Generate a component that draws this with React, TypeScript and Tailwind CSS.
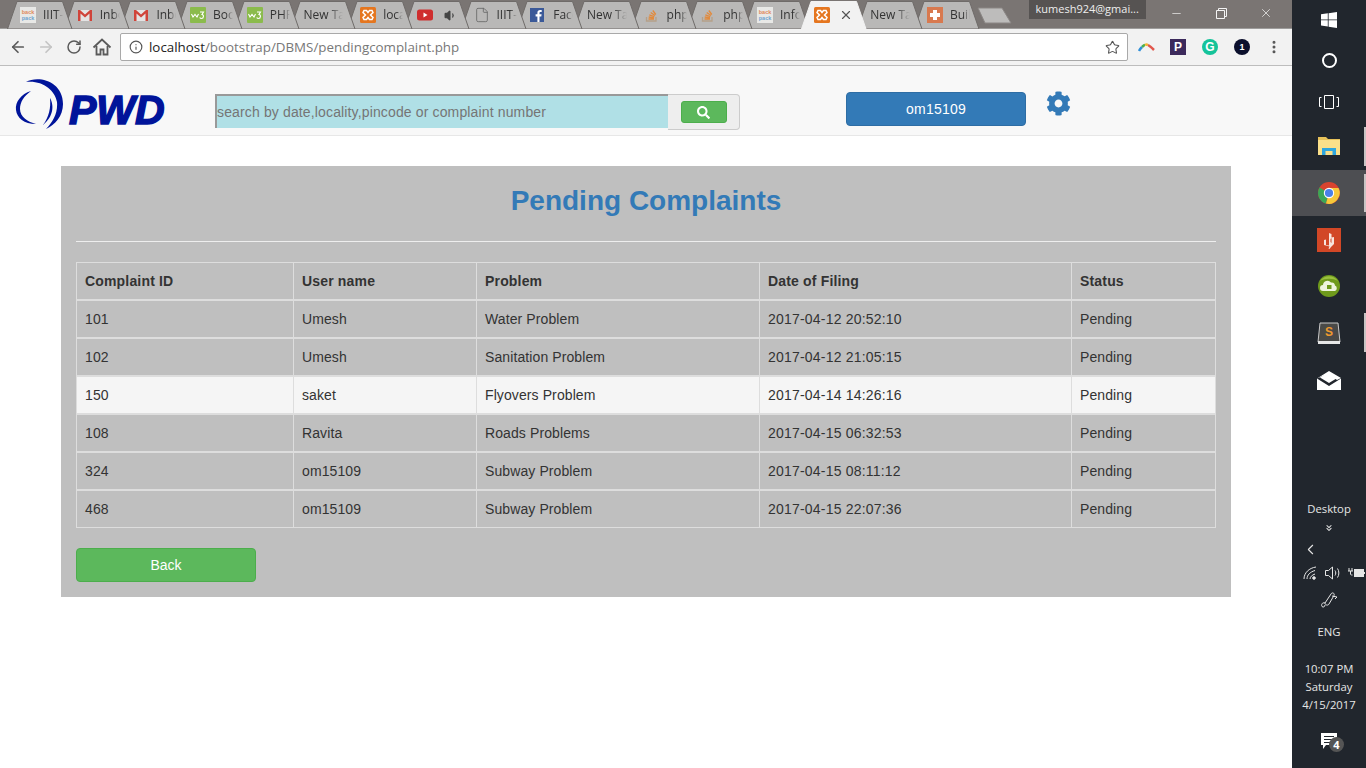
import React from 'react'
import { ArrowLeft, ArrowRight, RotateCw, Info, Star, X, Minus, Volume1, File, ChevronLeft, ChevronsDown, MoreVertical } from 'lucide-react'
import { FaCog, FaSearch } from 'react-icons/fa'

type Tab = { icon?: string; label?: string; active?: boolean }

const tabs: Tab[] = [
  { icon: 'backpack', label: 'IIIT-' },
  { icon: 'gmail', label: 'Inbox' },
  { icon: 'gmail', label: 'Inbox' },
  { icon: 'w3', label: 'Boot' },
  { icon: 'w3', label: 'PHP' },
  { label: 'New Tab' },
  { icon: 'xampp', label: 'local' },
  { icon: 'youtube' },
  { icon: 'doc', label: 'IIIT-' },
  { icon: 'fb', label: 'Face' },
  { label: 'New Tab' },
  { icon: 'so', label: 'php' },
  { icon: 'so', label: 'php' },
  { icon: 'backpack', label: 'Info' },
  { icon: 'xampp', active: true },
  { label: 'New Tab' },
  { icon: 'plus', label: 'Buil' },
]

const rows = [
  ['101', 'Umesh', 'Water Problem', '2017-04-12 20:52:10', 'Pending'],
  ['102', 'Umesh', 'Sanitation Problem', '2017-04-12 21:05:15', 'Pending'],
  ['150', 'saket', 'Flyovers Problem', '2017-04-14 14:26:16', 'Pending'],
  ['108', 'Ravita', 'Roads Problems', '2017-04-15 06:32:53', 'Pending'],
  ['324', 'om15109', 'Subway Problem', '2017-04-15 08:11:12', 'Pending'],
  ['468', 'om15109', 'Subway Problem', '2017-04-15 22:07:36', 'Pending'],
]

const Favicon = ({ name }: { name?: string }) => {
  if (name === 'backpack')
    return (
      <svg width="16" height="16" viewBox="0 0 16 16">
        <rect width="16" height="16" fill="#e8e8e6" />
        <text x="8" y="7" fontSize="5.5" fontWeight="700" fill="#e08a5c" textAnchor="middle" fontFamily="Liberation Sans">back</text>
        <text x="8" y="13" fontSize="5.5" fontWeight="700" fill="#6ea3cf" textAnchor="middle" fontFamily="Liberation Sans">pack</text>
      </svg>
    )
  if (name === 'gmail')
    return (
      <svg width="16" height="16" viewBox="0 0 16 16">
        <rect x="1" y="3" width="14" height="11" fill="#e4e4e4" />
        <path d="M1 14V3h2l5 4.500L13 3h2v11h-2.500V6.500L8 10.500 3.500 6.500V14z" fill="#d0443a" />
      </svg>
    )
  if (name === 'w3')
    return (
      <svg width="16" height="16" viewBox="0 0 16 16">
        <rect width="16" height="16" rx="1" fill="#8bbb4c" />
        <path d="M1.500 7l1.500 3 2-2.500 2 2.500 1.500-3M10 5h3.500l-1.500 2.500c2 0 2 4-.5 4-1 0-1.500-.5-1.800-1" fill="none" stroke="#fff" strokeWidth="1.100" />
      </svg>
    )
  if (name === 'xampp')
    return (
      <svg width="16" height="16" viewBox="0 0 16 16">
        <rect width="16" height="16" rx="1.500" fill="#e5761f" />
        <path d="M4 3.500h2.500L8 5.500l1.500-2H12l1 2-2.500 2.500 2.500 2.500-1 2H9.500L8 10.500l-1.500 2H4l-1-2L5.500 8 3 5.500z" fill="none" stroke="#fff" strokeWidth="1.500" />
      </svg>
    )
  if (name === 'youtube')
    return (
      <svg width="16" height="16" viewBox="0 0 16 16">
        <rect y="2.500" width="16" height="11" rx="2.500" fill="#cf2e2e" />
        <path d="M6.500 5.500v5L10.500 8z" fill="#fff" />
      </svg>
    )
  if (name === 'doc') return <File size={16} color="#666" strokeWidth={1.25} />
  if (name === 'fb')
    return (
      <svg width="16" height="16" viewBox="0 0 16 16">
        <rect width="14" height="14" y="1" fill="#3b5998" />
        <path d="M9.500 15V9.500h1.800l.3-2.200H9.500V6c0-.7.200-1.100 1.100-1.100h1.100V3c-.5-.1-1-.1-1.600-.1-1.600 0-2.700 1-2.700 2.800v1.600H5.600v2.200h1.800V15z" fill="#fff" />
      </svg>
    )
  if (name === 'so')
    return (
      <svg width="16" height="16" viewBox="0 0 16 16" fill="none" stroke="#e28a3c" strokeWidth="1.300">
        <path d="M2.500 10v4h9.500v-4" stroke="#b5a089" />
        <path d="M4.500 12h5.500M4.700 10l5.300 .8M5.300 7.800l5 1.800M6.700 5.500l4.300 3M8.800 3.500l3 4" />
      </svg>
    )
  if (name === 'plus')
    return (
      <svg width="16" height="16" viewBox="0 0 16 16">
        <rect width="16" height="16" fill="#d8794f" />
        <path d="M6 3h4v3h3v4h-3v3H6v-3H3V6h3z" fill="#fff" />
      </svg>
    )
  return null
}

const ChromeTab = ({ tab, index }: { tab: Tab; index: number }) => (
  <div className="relative h-[28px] w-[65.7px] shrink-0 -mr-[9px]" style={{ zIndex: tab.active ? 30 : 20 - index }}>
    <svg className="absolute inset-0" width="66" height="29" viewBox="0 0 66 29">
      <path d="M0.500 29L10 1.500h45.500L65 29z" fill={tab.active ? '#f2f2f2' : '#b9b8b7'} stroke={tab.active ? '#f2f2f2' : '#6f6b69'} strokeWidth="1" />
    </svg>
    <div className="relative flex h-[28px] items-center pl-[13px] pt-[2px] text-[12px] text-[#333] font-['Open_Sans',sans-serif]">
      {tab.icon && (
        <span className="mr-[7px] shrink-0">
          <Favicon name={tab.icon} />
        </span>
      )}
      {tab.label && (
        <span className={`overflow-hidden whitespace-nowrap [mask-image:linear-gradient(to_right,black_65%,transparent)] ${tab.icon ? 'w-[20px]' : 'w-[40px]'}`}>
          {tab.label}
        </span>
      )}
      {tab.icon === 'youtube' && <Volume1 size={13} className="ml-[4px]" color="#444" fill="#444" />}
      {tab.active && <X size={14} className="ml-[2px]" color="#555" strokeWidth={2} />}
    </div>
  </div>
)

const TitleBar = () => (
  <div className="flex h-[28px] bg-[#7a7573] pl-[7px]">
    <div className="flex">
      {tabs.map((tab, i) => (
        <ChromeTab key={i} tab={tab} index={i} />
      ))}
    </div>
    <svg className="ml-[6px] mt-[7px] shrink-0" width="36" height="17" viewBox="0 0 36 17">
      <path d="M1 1h24l9 15H8z" fill="#bdbcbb" stroke="#8b8785" />
    </svg>
    <div className="ml-[16px] flex h-[19px] w-[117px] shrink-0 items-center justify-center bg-[#565352] text-[11px] text-[#eee] font-['Open_Sans',sans-serif]">
      kumesh924@gmai...
    </div>
    <div className="ml-[24px] mt-[1px] flex h-[24px] items-start text-[#f4f4f4]">
      <Minus size={13} className="mt-[6px]" strokeWidth={1.25} />
      <svg className="ml-[33px] mt-[7px]" width="11" height="11" viewBox="0 0 11 11" fill="none" stroke="#f4f4f4">
        <path d="M.500 2.500h8v8h-8zM2.500 2.500v-2h8v8h-2" />
      </svg>
      <X size={14} className="ml-[32px] mt-[5px]" strokeWidth={1.25} />
    </div>
  </div>
)

const Toolbar = () => (
  <div className="flex h-[38px] items-center border-t border-b border-t-[#9d9c9b] border-b-[#bdbdbd] bg-[#f2f2f2] pl-[9px]">
    <ArrowLeft size={18} color="#5a5a5a" strokeWidth={2.25} />
    <ArrowRight size={18} color="#c4c4c4" strokeWidth={2.25} className="ml-[10px]" />
    <RotateCw size={16} color="#5a5a5a" strokeWidth={2.25} className="ml-[11px]" />
    <svg className="ml-[10px]" width="20" height="20" viewBox="0 0 20 20" fill="none" stroke="#5a5a5a" strokeWidth="1.800">
      <path d="M1.500 10.500L10 2.500l8.500 8" />
      <path d="M4.500 9v8.500h4v-5h3v5h4V9" />
    </svg>
    <div className="ml-[8px] flex h-[28px] w-[1008px] items-center rounded-[2px] border border-[#a9a9a9] bg-white pl-[8px] pr-[7px] text-[13.35px] font-['Open_Sans',sans-serif]">
      <Info size={14} color="#555" strokeWidth={2} />
      <span className="ml-[6px] text-[#222]">localhost</span>
      <span className="text-[#777]">/bootstrap/DBMS/pendingcomplaint.php</span>
      <Star size={15} color="#555" strokeWidth={1.75} className="ml-auto" />
    </div>
    <svg className="ml-[10px]" width="17" height="10" viewBox="0 0 17 10" fill="none" strokeWidth="2.500">
      <path d="M1 9c1-2 2-3 3-4" stroke="#2f8fd8" />
      <path d="M4 5c1-1 2-2 3-2" stroke="#4caf50" />
      <path d="M7 3c1-.5 2-.5 3 0" stroke="#f2b632" />
      <path d="M10 3c2 1 4 3 6 5" stroke="#e2574c" />
    </svg>
    <div className="ml-[15px] flex h-[16px] w-[16px] items-center justify-center bg-[#3c2a5c] text-[12px] font-bold leading-none text-white font-['Liberation_Sans',sans-serif]">P</div>
    <div className="ml-[16px] flex h-[16px] w-[16px] items-center justify-center rounded-full bg-[#15c39a] text-[12px] font-bold leading-none text-white font-['Liberation_Sans',sans-serif]">G</div>
    <div className="ml-[16px] flex h-[16px] w-[16px] items-center justify-center rounded-full bg-[#0b0f2c] text-[9px] font-bold leading-none text-white font-['Liberation_Sans',sans-serif]">1</div>
    <MoreVertical size={16} color="#555" strokeWidth={2.5} className="ml-[16px]" />
  </div>
)

const PwdLogo = () => (
  <div className="flex items-end">
    <svg width="50" height="52" viewBox="15 78 50 52" fill="#00149a" className="shrink-0">
      <path d="M26 82C38 75 63 81 63 104 63 116 55 125 46 129 53 122 58 113 57 102 55 90 42 80 26 82Z" />
      <path d="M31 91C21 94 15 102 16 110 17 118 24 124 36 124 28 122 20 117 20 109 20 102 24 96 31 91Z" />
      <path d="M50 98C54 105 54 116 43 125 49 117 51 108 50 98Z" />
    </svg>
    <span className="ml-[4px] mb-[3px] text-[41px] font-bold italic leading-[34px] text-[#00149a] font-['Liberation_Sans',sans-serif] [-webkit-text-stroke:1.5px_#00149a]">PWD</span>
  </div>
)

const SiteHeader = () => (
  <div className="flex h-[70px] items-start border-b border-[#e7e7e7] bg-[#f8f8f8]">
    <div className="ml-[15px] mt-[12px] w-[150px]">
      <PwdLogo />
    </div>
    <div className="ml-[50px] mt-[28px] flex h-[36px] w-[525px]">
      <input
        readOnly
        placeholder="search by date,locality,pincode or complaint number"
        className="h-[34px] w-[453px] border-2 border-b-0 border-r-0 border-[#999] bg-[#b0e0e6] text-[14px] tracking-[0.14px] outline-none placeholder:text-[#757575]"
      />
      <div className="flex flex-1 items-center justify-center rounded-r-[4px] border border-l-0 border-[#ccc] bg-[#eee]">
        <button className="flex h-[22px] w-[46px] items-center justify-center rounded-[3px] border border-[#4cae4c] bg-[#5cb85c] text-white">
          <FaSearch size={13} />
        </button>
      </div>
    </div>
    <button className="ml-[106px] mt-[26px] h-[34px] w-[180px] rounded-[4px] border border-[#2e6da4] bg-[#337ab7] text-[14px] tracking-[0.2px] text-white">om15109</button>
    <FaCog size={25} color="#337ab7" className="ml-[20px] mt-[25px]" />
  </div>
)

const columns = ['Complaint ID', 'User name', 'Problem', 'Date of Filing', 'Status']

const ComplaintPanel = () => (
  <div className="mx-[61px] mt-[30px] h-[431px] w-[1170px] bg-[#bfbfbf] px-[15px] pt-[20px]">
    <h2 className="h-[30px] text-center text-[28px] font-bold leading-[30px] text-[#337ab7]">Pending Complaints</h2>
    <hr className="mt-[25px] border-t border-[#eee]" />
    <table className="mt-[20px] w-[1139px] table-fixed border-collapse text-[14px] tracking-[0.1px] text-[#333]">
      <colgroup>
        <col className="w-[217px]" />
        <col className="w-[183px]" />
        <col className="w-[283px]" />
        <col className="w-[312px]" />
        <col className="w-[144px]" />
      </colgroup>
      <thead>
        <tr>
          {columns.map((c) => (
            <th key={c} className="h-[37px] border border-b-2 border-[#ddd] px-[8px] pt-[2px] text-left font-bold tracking-[0.17px]">{c}</th>
          ))}
        </tr>
      </thead>
      <tbody>
        {rows.map((row, i) => (
          <tr key={row[0]} className={row[0] === '150' ? 'bg-[#f5f5f5]' : ''}>
            {row.map((cell, j) => (
              <td key={j} className={`h-[38px] border border-[#ddd] px-[8px] pt-[2px] ${j === 3 ? 'tracking-[0.2px]' : ''} ${i < rows.length - 1 ? 'border-b-2' : ''}`}>{cell}</td>
            ))}
          </tr>
        ))}
      </tbody>
    </table>
    <button className="mt-[20px] h-[34px] w-[180px] rounded-[4px] border border-[#4cae4c] bg-[#5cb85c] text-[14px] text-white">Back</button>
  </div>
)

const Slot = ({ h, active, mark, children }: { h: string; active?: boolean; mark?: boolean; children: React.ReactNode }) => (
  <div className={`relative flex w-full items-center justify-center ${h} ${active ? 'bg-[#4d4e52]' : ''}`}>
    {children}
    {mark && <div className="absolute bottom-[4px] right-0 top-[4px] w-[2px] bg-[#c9c4c4]" />}
  </div>
)

const Taskbar = () => (
  <div className="flex h-[768px] w-[74px] shrink-0 flex-col bg-[#21262d] text-[11.3px] text-[#e6e6e6] font-['Open_Sans',sans-serif]">
    <Slot h="h-[40px]">
      <svg width="16" height="16" viewBox="0 0 16 16" fill="#fff">
        <path d="M0 2.300l6.800-1v6.200H0zM7.600 1.200L16 0v7.500H7.600zM0 8.300h6.800v6.300L0 13.600zM7.600 8.300H16V16l-8.400-1.200z" />
      </svg>
    </Slot>
    <Slot h="h-[40px]">
      <div className="h-[15px] w-[15px] rounded-full border-2 border-white" />
    </Slot>
    <Slot h="h-[43px]">
      <svg width="20" height="14" viewBox="0 0 20 14" fill="none" stroke="#fff">
        <path d="M5.500 .500h9v13h-9zM2.500 2.500h-2v9h2M17.500 2.500h2v9h-2" />
      </svg>
    </Slot>
    <Slot h="h-[47px]" mark>
      <svg width="22" height="18" viewBox="0 0 22 18" className="-mt-[2px]">
        <path d="M0 0h8l2 2h12v16H0z" fill="#e8c25a" />
        <rect y="3" width="22" height="15" fill="#fbe08a" />
        <path d="M4 18v-7h14v7h-3.500v-4h-7v4z" fill="#2fa6de" />
      </svg>
    </Slot>
    <Slot h="h-[46px]" active mark>
      <svg width="22" height="22" viewBox="0 0 22 22">
        <circle cx="11" cy="11" r="11" fill="#d8432f" />
        <path d="M11 11L1.500 5.500A11 11 0 0 0 8 21.600z" fill="#3aa757" />
        <path d="M11 6h9.500A11 11 0 0 1 8 21.600L11 11z" fill="#f7c83a" />
        <circle cx="11" cy="11" r="5.200" fill="#fff" />
        <circle cx="11" cy="11" r="4.100" fill="#4a80e8" />
      </svg>
    </Slot>
    <Slot h="h-[47px]">
      <svg width="24" height="24" viewBox="0 0 24 24">
        <rect width="24" height="24" fill="#d24726" />
        <path d="M7 12l2-.5V17l3 .5V5l2.500 1v4l-1 1v3l1 1V9.500L17 9v7l-3 3-1.500 2-1-.5 1-2L7 17z" fill="#f7e4dc" />
      </svg>
    </Slot>
    <Slot h="h-[46px]">
      <svg width="22" height="22" viewBox="0 0 22 22">
        <circle cx="11" cy="11" r="11" fill="#6f9a1c" />
        <path d="M2 6a11 11 0 0 1 18 0c-5-3-13-3-18 0z" fill="#9bc03f" />
        <path d="M5 16a3 3 0 0 1 0-6 4.500 4.500 0 0 1 8-2.500 3.500 3.500 0 0 1 4 3 3 3 0 0 1 0 5.500z" fill="#eef4dd" />
        <rect x="9" y="10" width="4.500" height="4" fill="#6f9a1c" />
      </svg>
    </Slot>
    <Slot h="h-[47px]" mark>
      <svg width="24" height="22" viewBox="0 0 24 22">
        <path d="M3 1h18l2 19H1z" fill="#4a4a48" stroke="#c9c9c9" />
        <rect x="1" y="19" width="22" height="3" fill="#e6e6e6" />
        <text x="12" y="14" fontSize="12" fontWeight="700" fill="#f09a2e" textAnchor="middle" fontFamily="Liberation Sans">S</text>
      </svg>
    </Slot>
    <Slot h="h-[48px]">
      <svg width="24" height="19" viewBox="0 0 24 19" fill="#fff">
        <path d="M12 0L0 7.500 6 5l6-2 8 6 4-2z" />
        <path d="M0 7.500L12 15 24 7.500V19H0z" />
        <path d="M3 6.500L12 1l9 5.500-9 5.500z" />
      </svg>
    </Slot>

    <div className="mt-auto flex flex-col items-center">
      <div className="flex h-[20px] items-center">Desktop</div>
      <div className="flex h-[18px] items-center">
        <ChevronsDown size={10} strokeWidth={2.5} />
      </div>
      <div className="flex h-[24px] w-full items-center pl-[10px]">
        <ChevronLeft size={17} strokeWidth={1.5} />
      </div>
      <div className="flex h-[24px] w-full items-center justify-between pl-[11px] pr-[1px]">
        <svg width="14" height="14" viewBox="0 0 14 14" fill="none" stroke="#e6e6e6">
          <path d="M1 13C1 7 6 2 13 1M4 13c0-4 3-7 8-8.500M7 13c0-2 2-4 5-5" />
          <circle cx="11" cy="12" r="1.300" fill="#e6e6e6" />
        </svg>
        <svg width="16" height="14" viewBox="0 0 16 14" fill="none" stroke="#e6e6e6">
          <path d="M.500 4.500h3L7.500 1v12l-4-3.500h-3z" />
          <path d="M10 4.500c1 1.500 1 3.500 0 5M12.500 2.500c1.800 2.500 1.800 6.500 0 9" />
        </svg>
        <svg width="17" height="12" viewBox="0 0 17 12" fill="none" stroke="#e6e6e6">
          <path d="M1 1v3M4 1v3M0 4h5M2.500 4v3c0 1 1 1 2 1" />
          <rect x="6.500" y="2.500" width="9" height="7" fill="#e6e6e6" />
          <path d="M16.500 5v2" />
        </svg>
      </div>
      <div className="flex h-[30px] items-center">
        <svg width="18" height="18" viewBox="0 0 18 18" fill="none" stroke="#e6e6e6">
          <path d="M5 12l6-9c1-2 4-1 3 1.500L9 13c-1 2-4 1-4-1zM12 5l5 1-2 2M5 12c-3-1-4 2-3 3.500 1 1 3 .5 3-1.500" />
        </svg>
      </div>
      <div className="flex h-[34px] items-center">ENG</div>
      <div className="mt-[11px] flex flex-col items-center leading-[18px]">
        <span>10:07 PM</span>
        <span>Saturday</span>
        <span>4/15/2017</span>
      </div>
      <div className="relative flex h-[54px] w-full items-center justify-center">
        <svg width="17" height="17" viewBox="0 0 17 17">
          <path d="M0 0h16v12H5l-3 4v-4H0z" fill="#fff" />
          <path d="M3 3.500h10M3 6.500h10M3 9.500h7" stroke="#21262d" />
        </svg>
        <span className="absolute left-[37px] top-[23px] flex h-[15px] w-[15px] items-center justify-center rounded-full bg-[#555] text-[11px] font-bold leading-none text-white">4</span>
      </div>
    </div>
  </div>
)

const App = () => {
  return (
    <div className="flex h-[768px] w-[1366px] overflow-hidden bg-white font-['Liberation_Sans',sans-serif]">
      <div className="w-[1292px] shrink-0">
        <TitleBar />
        <Toolbar />
        <SiteHeader />
        <ComplaintPanel />
      </div>
      <Taskbar />
    </div>
  )
}

export default App
